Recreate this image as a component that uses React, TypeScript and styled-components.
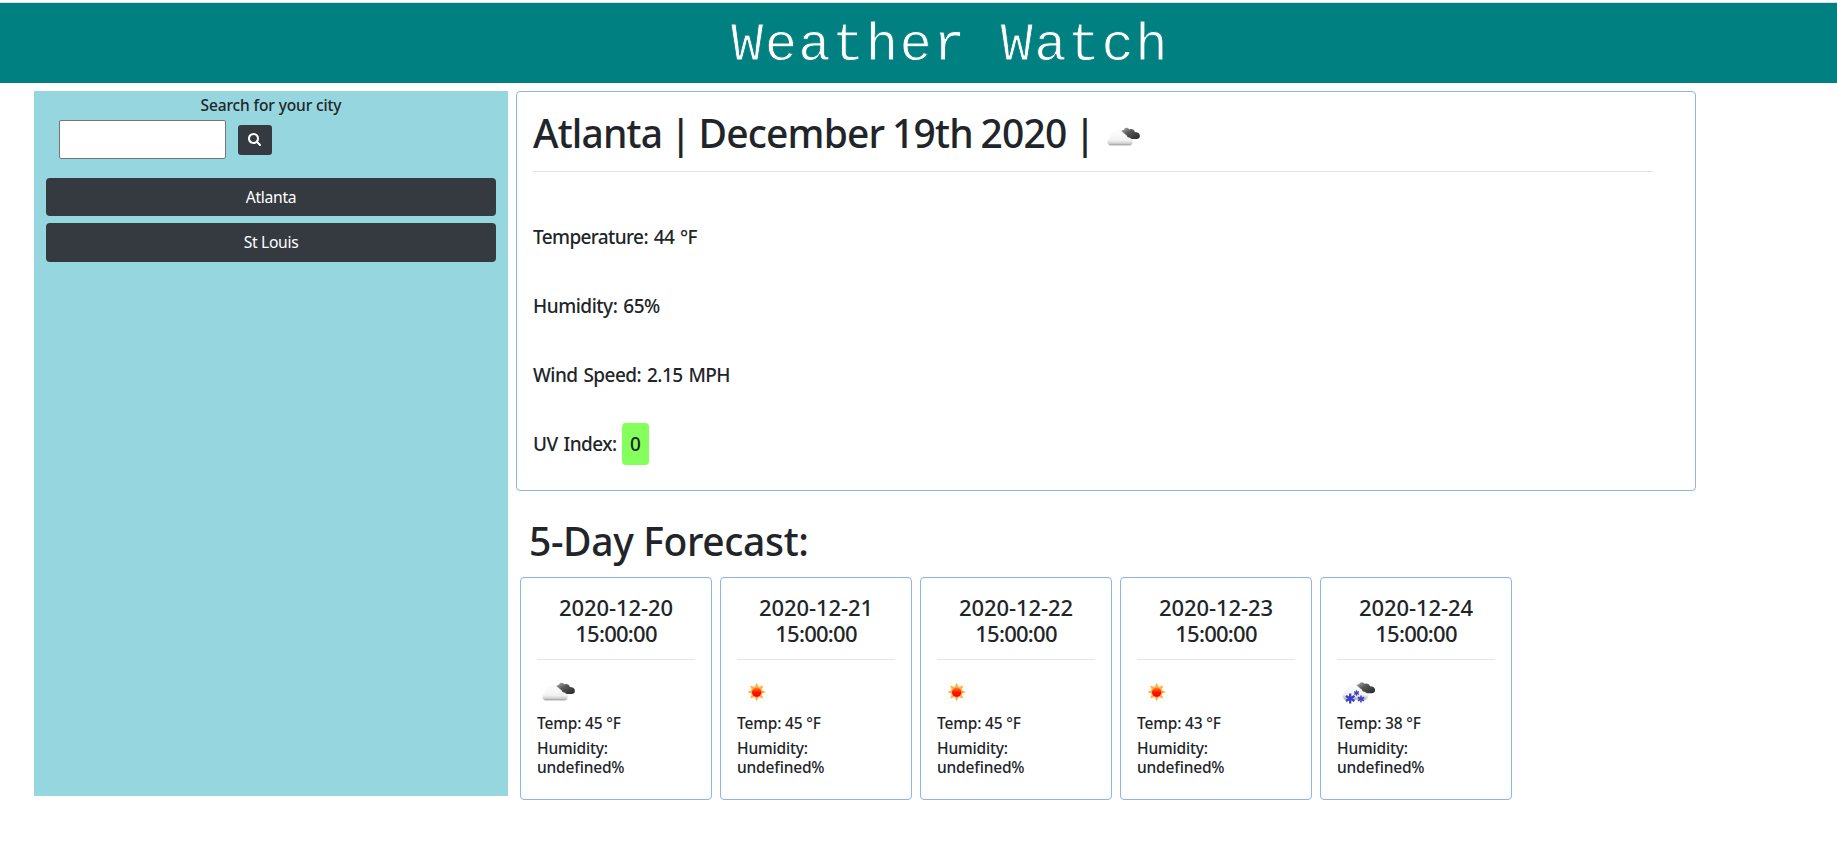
import React from "react";
import styled, { createGlobalStyle } from "styled-components";

const GlobalStyle = createGlobalStyle`
  *, *::before, *::after { box-sizing: border-box; }
  body {
    margin: 0;
    background: #fff;
    color: #212529;
    font-family: "Noto Sans", "Open Sans", sans-serif;
    font-size: 15.5px;
  }
  h1, h2, h3, h4, h5, p { margin: 0; font-weight: 500; }
`;

const Page = styled.div`
  min-height: 854px;
  padding-top: 2px;
`;

const Header = styled.header`
  display: flex;
  height: 81px;
  padding: 3px 0 0 731px;
  background: #008080;
  border-top: 1px solid #d5dde3;
`;

const Brand = styled.h1`
  && { font-weight: 400; }
  color: #fff;
  font-family: "Liberation Mono", monospace;
  font-size: 54px;
  line-height: 80px;
  letter-spacing: 1.28px;
  white-space: pre;
  -webkit-text-stroke: 0.9px #008080;
`;

const Columns = styled.div`
  display: flex;
  align-items: flex-start;
  gap: 8px;
  padding: 8px 0 0 34px;
`;

const Sidebar = styled.aside`
  width: 474px;
  height: 705px;
  padding: 2px 12px 0;
  background: #96d6de;
`;

const SearchLabel = styled.p`
  line-height: 24px;
  letter-spacing: -0.13px;
  text-align: center;
`;

const SearchRow = styled.div`
  display: flex;
  align-items: center;
  gap: 12px;
  margin: 3px 0 19px 13px;
`;

const SearchInput = styled.input`
  width: 167px;
  height: 39px;
  padding: 1px 2px;
  background: #fff;
  border: 1px solid #767676;
  border-radius: 2px;
`;

const SearchButton = styled.button`
  display: flex;
  align-items: center;
  justify-content: center;
  width: 34px;
  height: 30px;
  padding: 0 1px 0 0;
  border: 0;
  border-radius: 3px;
  background: #343a40;
  color: #fff;
`;

const CityList = styled.div`
  display: flex;
  flex-direction: column;
  gap: 7px;
`;

const CityButton = styled.button`
  height: 38px;
  padding: 0;
  border: 0;
  border-radius: 4px;
  background: #343a40;
  color: #fff;
  font: 400 15.7px/24px "Noto Sans", sans-serif;
  letter-spacing: -0.33px;

  &:last-child {
    height: 39px;
    padding-bottom: 1px;
  }
`;

const Main = styled.main`
  width: 1180px;
`;

const CurrentCard = styled.section`
  height: 400px;
  padding: 17px 42px 0 16px;
  border: 1px solid #8cb8e0;
  border-radius: 4px;
`;

const CurrentTitle = styled.h2`
  display: flex;
  gap: 7px;
  height: 48px;
  font-size: 39px;
  line-height: 48px;
  letter-spacing: -0.83px;
  word-spacing: -1.5px;
  white-space: nowrap;
`;

const TitleIcon = styled.span`
  display: flex;
  padding-top: 3px;
`;

const Rule = styled.hr<{ $gap: number; $after: number }>`
  height: 1px;
  margin: ${(p) => p.$gap}px 0 ${(p) => p.$after}px;
  border: 0;
  background: #e3e3e4;
`;

const Readings = styled.div`
  display: flex;
  flex-direction: column;
  gap: 45px;
`;

const Reading = styled.h5<{ $tracking: number }>`
  display: flex;
  align-items: center;
  height: 24px;
  font-size: 19px;
  line-height: 24px;
  letter-spacing: ${(p) => p.$tracking}px;
  word-spacing: 1.5px;
`;

const UvBadge = styled.span`
  flex: none;
  width: 27px;
  margin-left: 5px;
  padding-top: 1px;
  border-radius: 4px;
  background: #84ff5c;
  line-height: 41px;
  text-align: center;
`;

const ForecastTitle = styled.h2`
  margin: 26px 0 12px 13px;
  font-size: 39px;
  line-height: 48px;
  letter-spacing: -0.36px;
`;

const ForecastRow = styled.div`
  display: flex;
  gap: 8px;
  padding-left: 4px;
`;

const DayCard = styled.article`
  width: 192px;
  height: 223px;
  padding: 16px;
  border: 1px solid #8cb8e0;
  border-radius: 4px;
`;

const DayDate = styled.h4`
  font-size: 22px;
  line-height: 26px;
  letter-spacing: -0.1px;
  text-align: center;
`;

const DayTime = styled.span`
  letter-spacing: -0.75px;
`;

const DayIcon = styled.div`
  height: 47px;
`;

const DayText = styled.p`
  margin-bottom: 6px;
  line-height: 19px;
  letter-spacing: -0.17px;
`;

type Sky = "clouds" | "sun" | "snow";

const Clouds = () => (
  <>
    <defs>
      <linearGradient id="pale" x1="0" y1="0" x2="0" y2="1">
        <stop offset="0" stopColor="#ffffff" />
        <stop offset="0.65" stopColor="#f2f2f2" />
        <stop offset="0.85" stopColor="#d2d2d2" />
        <stop offset="1" stopColor="#969696" />
      </linearGradient>
      <linearGradient id="dark" x1="0" y1="0" x2="1" y2="1">
        <stop offset="0" stopColor="#b4b4b4" />
        <stop offset="0.4" stopColor="#585858" />
        <stop offset="1" stopColor="#262626" />
      </linearGradient>
    </defs>
    <path
      d="M19 21 C18.5 18.5 20 17.5 21.5 18 C22 15.5 25.5 15 27 17.5 C29 16.5 32 17.5 32.5 20 C35.500 20 37.500 21.500 37.500 24 C37.500 26 36 27 34 27 H28 C26 27 25 25 24 23 Z"
      fill="url(#dark)"
    />
    <path
      d="M8.500 33.500 C6 33.500 4.800 31.500 5.200 29.500 C5.500 27.500 6.500 26.500 8 26 C8 22.500 10 20.500 12.500 21 C13.500 18.500 18 17.500 20.500 20.500 C22.500 21.500 23.500 23.500 23.500 25.500 C27.500 25 30.300 27 30.300 30 C30.300 32 29 33.500 27 33.500 Z"
      fill="url(#pale)"
      stroke="#ececec"
      strokeWidth="0.4"
    />
  </>
);

const Flake = ({ x, y, r }: { x: number; y: number; r: number }) => (
  <g transform={`translate(${x} ${y})`} stroke="#3840c4" strokeWidth={r * 0.45}>
    <path d={`M0 ${-r} V${r}`} />
    <path d={`M0 ${-r} V${r}`} transform="rotate(60)" />
    <path d={`M0 ${-r} V${r}`} transform="rotate(120)" />
  </g>
);

const Sun = () => (
  <>
    <defs>
      <linearGradient id="core" x1="0" y1="0" x2="0" y2="1">
        <stop offset="0" stopColor="#ff8a1c" />
        <stop offset="0.5" stopColor="#ff1600" />
        <stop offset="1" stopColor="#ff0000" />
      </linearGradient>
    </defs>
    {[0, 45, 90, 135, 180, 225, 270, 315].map((a) => (
      <path
        key={a}
        d="M17.600 20.500 L19.700 15.700 L21.800 20.500 Z"
        fill="#ffab3d"
        transform={`rotate(${a} 19.700 25)`}
      />
    ))}
    <circle cx="19.700" cy="25" r="5.500" fill="#ffb34d" />
    <circle cx="19.700" cy="25.200" r="4.700" fill="url(#core)" />
  </>
);

const WeatherIcon = ({ sky }: { sky: Sky }) => (
  <svg width="50" height="50" viewBox="0 0 50 50" fill="none">
    {sky === "sun" ? (
      <Sun />
    ) : (
      <g transform={sky === "snow" ? "translate(0.6 -0.7)" : "translate(0.4 0)"}>
        <Clouds />
      </g>
    )}
    {sky === "snow" && (
      <>
        <Flake x={13.2} y={31.5} r={5} />
        <Flake x={19.5} y={26} r={2.7} />
        <Flake x={24} y={32} r={3.5} />
      </>
    )}
  </svg>
);

const days: { date: string; sky: Sky; temp: number }[] = [
  { date: "2020-12-20", sky: "clouds", temp: 45 },
  { date: "2020-12-21", sky: "sun", temp: 45 },
  { date: "2020-12-22", sky: "sun", temp: 45 },
  { date: "2020-12-23", sky: "sun", temp: 43 },
  { date: "2020-12-24", sky: "snow", temp: 38 },
];

export default function App() {
  return (
    <Page>
      <GlobalStyle />
      <Header>
        <Brand>Weather Watch</Brand>
      </Header>
      <Columns>
        <Sidebar>
          <SearchLabel>Search for your city</SearchLabel>
          <SearchRow>
            <SearchInput aria-label="City" />
            <SearchButton aria-label="Search">
              <svg width="13" height="13" viewBox="0 0 1664 1664" fill="currentColor">
                <path d="M1152 704q0-185-131.500-316.500t-316.500-131.500t-316.500 131.500t-131.500 316.500t131.500 316.500t316.500 131.500t316.500-131.500t131.500-316.500zM1664 1536q0 52-38 90t-90 38q-54 0-90-38l-343-342q-179 124-399 124q-143 0-273.500-55.500t-225-150t-150-225t-55.500-273.500t55.500-273.500t150-225t225-150t273.500-55.500t273.500 55.500t225 150t150 225t55.500 273.500q0 220-124 399l343 343q37 37 37 90z" />
              </svg>
            </SearchButton>
          </SearchRow>
          <CityList>
            <CityButton>Atlanta</CityButton>
            <CityButton>St Louis</CityButton>
          </CityList>
        </Sidebar>
        <Main>
          <CurrentCard>
            <CurrentTitle>
              Atlanta | December 19th 2020 |
              <TitleIcon>
                <WeatherIcon sky="clouds" />
              </TitleIcon>
            </CurrentTitle>
            <Rule $gap={14} $after={53} />
            <Readings>
              <Reading $tracking={-0.62}>Temperature: 44 °F</Reading>
              <Reading $tracking={-0.48}>Humidity: 65%</Reading>
              <Reading $tracking={-0.55}>Wind Speed: 2.15 MPH</Reading>
              <Reading $tracking={-0.55}>
                UV Index: <UvBadge>0</UvBadge>
              </Reading>
            </Readings>
          </CurrentCard>
          <ForecastTitle>5-Day Forecast:</ForecastTitle>
          <ForecastRow>
            {days.map((d) => (
              <DayCard key={d.date}>
                <DayDate>
                  {d.date} <DayTime>15:00:00</DayTime>
                </DayDate>
                <Rule $gap={13} $after={7} />
                <DayIcon>
                  <WeatherIcon sky={d.sky} />
                </DayIcon>
                <DayText>Temp: {d.temp} °F</DayText>
                <DayText>Humidity: undefined%</DayText>
              </DayCard>
            ))}
          </ForecastRow>
        </Main>
      </Columns>
    </Page>
  );
}
